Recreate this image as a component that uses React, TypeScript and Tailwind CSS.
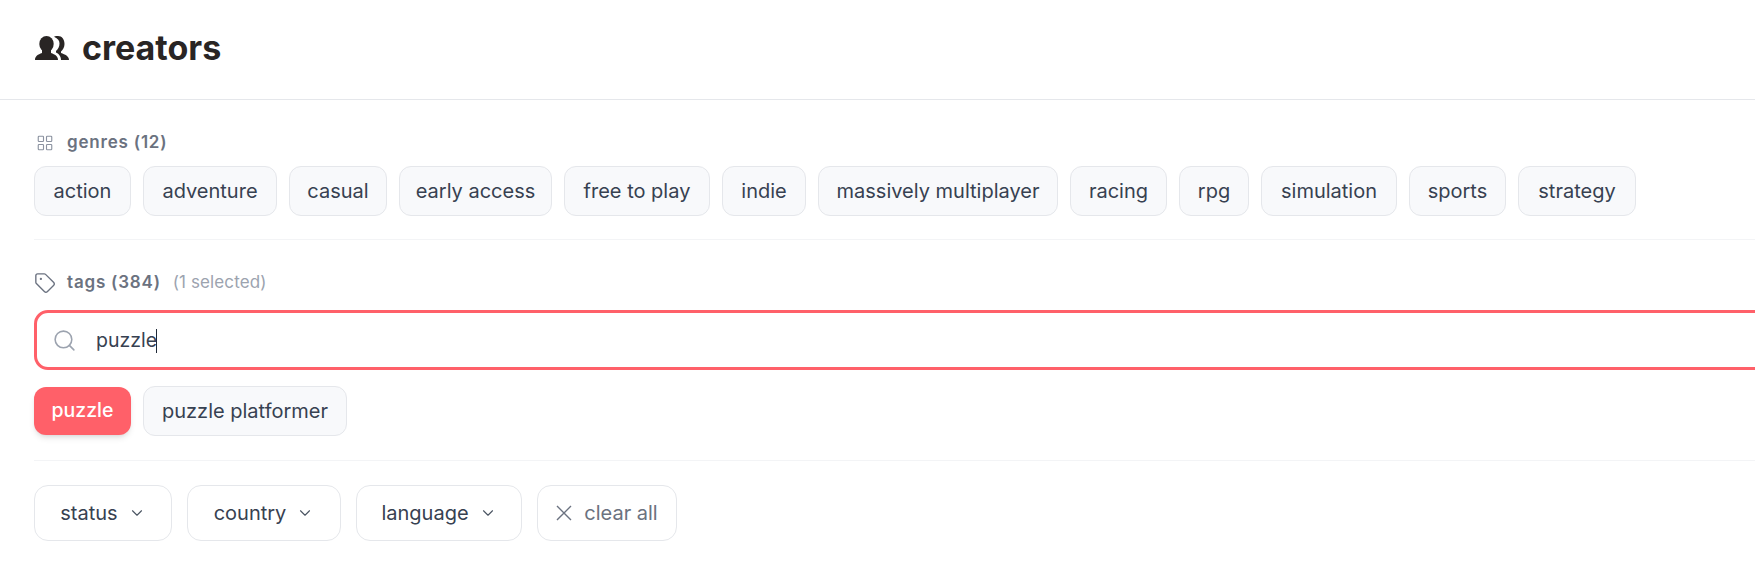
import { ChevronDown, LayoutGrid, Search, Tag } from 'lucide-react'

const genres = [
  { label: 'action', width: 'w-[97px]' },
  { label: 'adventure', width: 'w-[134px]' },
  { label: 'casual', width: 'w-[98px]' },
  { label: 'early access', width: 'w-[153px]' },
  { label: 'free to play', width: 'w-[146px]' },
  { label: 'indie', width: 'w-[84px]' },
  { label: 'massively multiplayer', width: 'w-[240px]' },
  { label: 'racing', width: 'w-[97px]' },
  { label: 'rpg', width: 'w-[70px]' },
  { label: 'simulation', width: 'w-[136px]' },
  { label: 'sports', width: 'w-[97px]' },
  { label: 'strategy', width: 'w-[118px]' },
]

const Chip = ({ label, width, active }: { label: string; width: string; active?: boolean }) => (
  <button
    className={
      active
        ? `${width} h-[48px] rounded-[12px] bg-[#ff6069] text-white text-[19.5px] font-medium shadow-md`
        : `${width} h-[50px] rounded-[12px] border border-[#e5e7eb] bg-[#f8f9fb] text-[#374151] text-[20px]`
    }
  >
    {label}
  </button>
)

const Filter = ({ label, width }: { label: string; width: string }) => (
  <button className={`${width} h-[56px] flex items-center justify-center gap-[10px] rounded-[14px] border border-[#e5e7eb] bg-white text-[#374151] text-[20px]`}>
    {label}
    <ChevronDown className="w-[18px] h-[18px] text-[#4b5563]" strokeWidth={1.5} />
  </button>
)

const CreatorsIcon = () => (
  <svg viewBox="0 0 34 24" className="w-[34px] h-[24px] text-[#292524]" fill="currentColor">
    <ellipse cx="11.5" cy="8" rx="7.2" ry="8" />
    <path d="M0 24C0 20 3 18.5 7 17V13h9v4C20 18.500 23 20 23 24Z" />
    <path d="M19 .8C20.500 0 22 0 23 0C27 0 29.500 3.500 29.500 8C29.500 11 28 14 26 15.500V17C30 18.500 34 20 34 24H26C26 20 23.500 17.500 21 16.500V15C23 13 24.500 10.500 24.500 7.500C24.500 5 23 2.500 19 .8Z" />
  </svg>
)

const App = () => {
  return (
    <div className="h-[568px] overflow-hidden bg-white font-['Inter',sans-serif]">
      <div className="w-[1800px]">
        <header className="h-[100px] pl-[35px] pb-[4px] flex items-center gap-[13px] border-b border-[#e5e7eb]">
          <CreatorsIcon />
          <h1 className="text-[34px] font-bold text-[#292524]">creators</h1>
        </header>

        <div className="pl-[34px]">
          <section className="pt-[33px] pb-[23px] border-b border-[#f3f4f6]">
            <div className="h-[20px] flex items-center text-[#6b7280] text-[17px] font-semibold tracking-[0.8px]">
              <LayoutGrid className="w-[18px] h-[18px] ml-[2px] mr-[13px] text-[#8b92a0]" strokeWidth={1.5} />
              genres (12)
            </div>
            <div className="mt-[13px] flex gap-[12px]">
              {genres.map((g) => (
                <Chip key={g.label} label={g.label} width={g.width} />
              ))}
            </div>
          </section>

          <section className="pt-[33px] pb-[24px] border-b border-[#f3f4f6]">
            <div className="h-[20px] flex items-center text-[#6b7280] text-[17px] font-semibold tracking-[0.8px]">
              <Tag className="w-[22px] h-[22px] mr-[11px]" strokeWidth={1.5} />
              tags (384)
              <span className="ml-[12px] font-normal text-[#9ca3af] tracking-[0.1px]">(1 selected)</span>
            </div>
            <div className="mt-[17px] h-[60px] flex items-center pl-[15px] gap-[19px] rounded-[14px] border-[3px] border-[#ff6069] text-[#374151] text-[19.5px]">
              <Search className="w-[25px] h-[25px] text-[#9ca3af]" strokeWidth={1.5} />
              <span className="flex items-center pt-[2px]">
                puzzle
                <span className="w-[1px] h-[24px] -ml-[1px] bg-[#1f2937]" />
              </span>
            </div>
            <div className="mt-[16px] flex items-center gap-[12px]">
              <Chip label="puzzle" width="w-[97px]" active />
              <Chip label="puzzle platformer" width="w-[204px]" />
            </div>
          </section>

          <section className="pt-[24px] flex gap-[15px]">
            <Filter label="status" width="w-[138px]" />
            <Filter label="country" width="w-[154px]" />
            <Filter label="language" width="w-[166px]" />
            <button className="w-[140px] h-[56px] flex items-center justify-center gap-[12px] rounded-[14px] border border-[#e5e7eb] bg-white text-[#6b7280] text-[20px]">
              <svg viewBox="0 0 16 16" className="w-[16px] h-[16px]" fill="none" stroke="currentColor" strokeWidth={1.4}>
                <path d="M1 1l14 14M15 1L1 15" />
              </svg>
              clear all
            </button>
          </section>
        </div>
      </div>
    </div>
  )
}

export default App
